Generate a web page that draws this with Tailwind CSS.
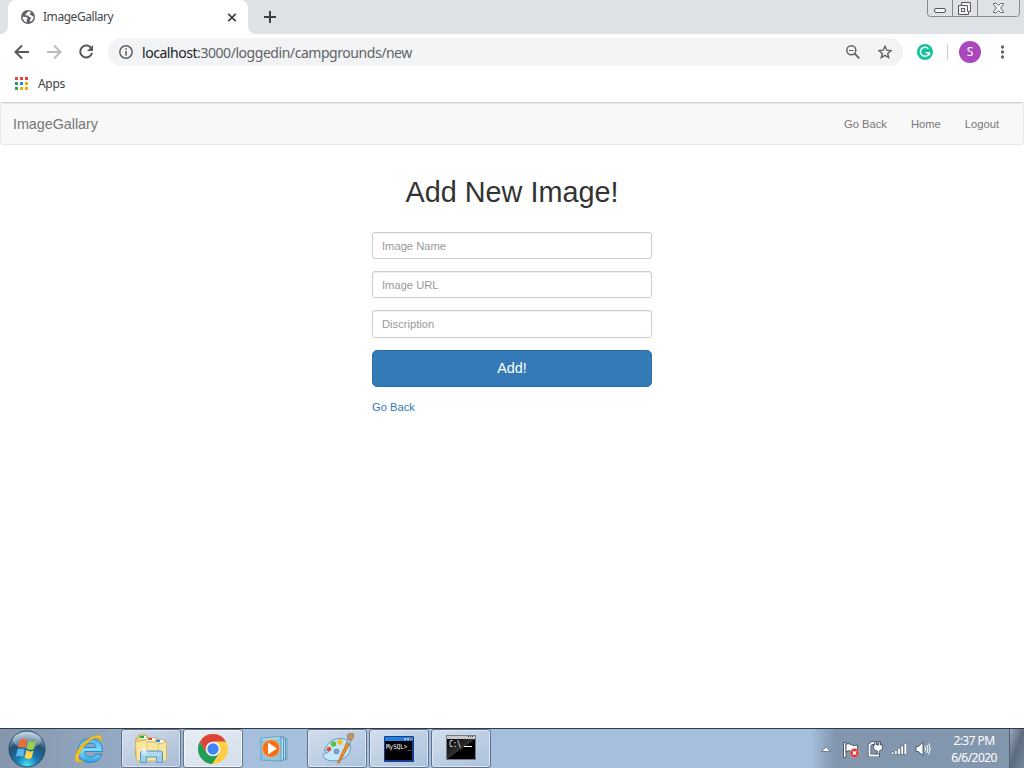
<!DOCTYPE html>
<html lang="en">
<head>
<meta charset="utf-8">
<title>ImageGallary</title>
<script src="https://cdn.jsdelivr.net/npm/@tailwindcss/browser@4"></script>
</head>
<body class="w-[1024px] h-[768px] overflow-hidden bg-white flex flex-col font-['Liberation_Sans',Arial,sans-serif]">

<!-- Tab strip -->
<div class="h-[34px] shrink-0 bg-[#dee1e6] flex justify-between items-start font-['Noto_Sans','Open_Sans',sans-serif]">
  <div class="flex h-[34px]">
    <div class="w-2 h-full bg-white"><div class="w-full h-full bg-[#dee1e6] rounded-br-lg"></div></div>
    <div class="w-[240px] h-full bg-[#dee1e6]">
      <div class="w-full h-full bg-white rounded-t-lg flex items-center pl-[13px]">
        <svg class="w-[14px] h-[14px]" viewBox="0 0 14 14"><circle cx="7" cy="7" r="7" fill="#5f6368"/><path d="M8 1.300 Q5.500 1.800 5.800 3.300 L4.400 4 Q4.200 5.500 5.500 5.400 H7.300 Q7.500 7 9.200 6.900 Q10.600 7.400 9.700 8.700 Q8.500 9.400 8.900 11.800 A5.500 5.500 0 0 0 12.700 6.500 L11 6 Q10.300 4.700 8.700 4.800 Q8.200 3.600 9.700 3.200 L9.600 1.900 Z" fill="#fff"/><path d="M1.400 6.700 L4.900 7 Q6.800 7.300 6.400 9 L5.600 9.700 L5.700 12.400 Q2 11.400 1.400 6.700Z" fill="#fff"/></svg>
        <span class="ml-2 text-[12px] tracking-[-0.45px] text-[#45494d] w-[184px]">ImageGallary</span>
        <svg class="w-[10px] h-[9px]" viewBox="0 0 10 9"><path d="M1.300 .8L8.700 8.200M8.700 .8L1.300 8.200" stroke="#3c4043" stroke-width="1.700"/></svg>
      </div>
    </div>
    <div class="w-2 h-full bg-white"><div class="w-full h-full bg-[#dee1e6] rounded-bl-lg"></div></div>
    <svg class="ml-2 mt-[11px] w-3 h-3" viewBox="0 0 12 12"><path d="M6 0V12M0 6H12" stroke="#3c4043" stroke-width="2"/></svg>
  </div>
  <svg class="w-[94px] h-[17px] mr-[3px]" viewBox="0 0 94 17">
    <path d="M.5 0V13.500Q.5 16.500 3.500 16.500H89.500Q92.500 16.500 92.500 13.500V0M25.500 0V16M50.500 0V16" fill="none" stroke="#85888c"/>
    <rect x="7.500" y="8.500" width="11" height="4" rx="1.500" fill="#f4f4f4" stroke="#54575c"/>
    <path d="M34.500 2.500H43.500V11.500H41.500V14.500H31.500V5.500H34.500Z" fill="#f4f4f4" stroke="#54575c"/><path d="M34.500 5.500H40.500V11.500" fill="none" stroke="#54575c"/><rect x="34.500" y="8.500" width="3" height="3" fill="#fff" stroke="#54575c"/>
    <path d="M66.500 3.500H69.500L71.500 5.500L73.500 3.500H76.500V4.500L73.500 8L76.500 11.500V12.500H73.500L71.500 10.500L69.500 12.500H66.500V11.500L69.500 8L66.500 4.500Z" fill="#f6f6f6" stroke="#65686c"/>
  </svg>
</div>

<!-- Toolbar -->
<div class="h-[36px] shrink-0 flex items-center pl-[14px] font-['Noto_Sans','Open_Sans',sans-serif]">
  <svg class="w-4 h-4" viewBox="0 0 16 16" fill="none" stroke="#55595d" stroke-width="2"><path d="M15 8H2.500M8 1.500L1.500 8L8 14.500"/></svg>
  <svg class="ml-4 w-4 h-4" viewBox="0 0 16 16" fill="none" stroke="#babcbe" stroke-width="2"><path d="M1 8H13.500M8 1.500L14.500 8L8 14.500"/></svg>
  <svg class="ml-4 w-4 h-4" viewBox="0 0 16 16" fill="none"><path d="M13.500 4.700A6 6 0 1 0 14 9" stroke="#55595d" stroke-width="2"/><path d="M15 1V7H9Z" fill="#55595d"/></svg>
  <div class="ml-[14px] w-[795px] h-7 rounded-full bg-[#f1f3f4] flex items-center pl-[11px]">
    <svg class="w-[14px] h-[14px]" viewBox="0 0 14 14"><circle cx="7" cy="7" r="6.200" fill="none" stroke="#5f6368" stroke-width="1.500"/><path d="M7 6V10.500M7 3.200V4.800" stroke="#5f6368" stroke-width="1.600"/></svg>
    <span class="ml-[9px] w-[704px] whitespace-nowrap text-[14px] tracking-[-0.45px] text-[#5f6368]"><span class="text-[#202124]">localhost</span>:3000/loggedin/campgrounds/new</span>
    <svg class="w-[14px] h-[14px]" viewBox="0 0 14 14" fill="none" stroke="#5f6368"><circle cx="5.300" cy="5.300" r="4.500" stroke-width="1.500"/><path d="M8.600 8.600L13.300 13.300" stroke-width="1.900"/><path d="M3 5.500H7.600"/></svg>
    <svg class="ml-[18px] w-[14px] h-[14px]" viewBox="0 0 14 14"><path d="M7 1.300L8.700 5.200L13 5.600L9.700 8.400L10.700 12.600L7 10.400L3.300 12.600L4.300 8.400L1 5.600L5.300 5.200Z" fill="none" stroke="#5f6368" stroke-width="1.400"/></svg>
  </div>
  <svg class="ml-[14px] w-4 h-4" viewBox="0 0 16 16"><circle cx="8" cy="8" r="8" fill="#15c39a"/><path d="M11.300 4.700A4.500 4.500 0 1 0 12.300 8.800H8.700M12.400 8.200V11.500" fill="none" stroke="#fff" stroke-width="1.400"/></svg>
  <div class="ml-[14px] w-px h-4 bg-[#c8cacd]"></div>
  <div class="ml-[11px] w-[22px] h-[22px] rounded-full bg-[#ab47bc] text-white text-[12px] leading-[22px] text-center">S</div>
  <svg class="ml-[19px] w-[5px] h-[14px]" viewBox="0 0 5 14" fill="#5f6368"><circle cx="2.500" cy="2" r="1.650"/><circle cx="2.500" cy="7" r="1.650"/><circle cx="2.500" cy="12" r="1.650"/></svg>
</div>

<!-- Bookmarks bar -->
<div class="h-[33px] shrink-0 border-b border-[#d2d3d5] flex items-start pt-[7px] pl-[15px] font-['Noto_Sans','Open_Sans',sans-serif]">
  <svg class="w-[13px] h-[13px]" viewBox="0 0 13 13"><path d="M0 0h3v3H0zM5 0h3v3H5zM10 0h3v3H10z" fill="#ea4335"/><path d="M0 5h3v3H0zM0 10h3v3H0z" fill="#34a05a"/><path d="M5 5h3v3H5z" fill="#1e88f5"/><path d="M10 5h3v3H10zM5 10h3v3H5zM10 10h3v3H10z" fill="#f5ae08"/></svg>
  <span class="ml-[10px] text-[12px] leading-[14px] tracking-[-0.3px] text-[#3c4043]">Apps</span>
</div>

<!-- Page -->
<nav class="h-[42px] shrink-0 bg-[#f8f8f8] border border-[#e7e7e7] rounded-[3px] flex items-center justify-between pl-3 pr-6 text-[#777]">
  <a class="text-[14.4px] tracking-[-0.06px] pt-[2px]">ImageGallary</a>
  <div class="flex gap-6 text-[11.2px]"><a>Go Back</a><a>Home</a><a>Logout</a></div>
</nav>
<main class="flex-1 flex flex-col items-center text-[11.2px]">
  <h1 class="mt-[31px] text-[28.8px] leading-[32px] text-[#333]">Add New Image!</h1>
  <form class="mt-[24px] w-[280px] flex flex-col">
    <input placeholder="Image Name" class="h-[27px] border border-[#ccc] rounded-[3px] px-[9px] placeholder-[#999] shadow-[inset_0_1px_1px_rgba(0,0,0,0.06)]">
    <input placeholder="Image URL" class="mt-3 h-[27px] border border-[#ccc] rounded-[3px] px-[9px] placeholder-[#999] shadow-[inset_0_1px_1px_rgba(0,0,0,0.06)]">
    <input placeholder="Discription" class="mt-3 h-[28px] border border-[#ccc] rounded-[3px] px-[9px] placeholder-[#999] shadow-[inset_0_1px_1px_rgba(0,0,0,0.06)]">
    <button type="button" class="mt-3 h-[37px] bg-[#337ab7] border border-[#2e6da4] rounded-[5px] text-white text-[14.4px]">Add!</button>
    <a class="mt-3 leading-4 text-[#337ab7]">Go Back</a>
  </form>
</main>

<!-- Taskbar -->
<footer class="h-10 shrink-0 border-t border-[#303a47] bg-linear-to-r from-[#8596ad] from-0% via-[#a6bfdc] via-24% to-[#a6bfdc] to-76% flex font-['Noto_Sans','Open_Sans',sans-serif]">
  <div class="w-[59px] flex items-center pl-2">
    <svg class="w-[38px] h-[38px]" viewBox="0 0 38 38">
      <defs><radialGradient id="orb" cx=".5" cy=".95" r=".9"><stop offset="0" stop-color="#45e4f5"/><stop offset=".35" stop-color="#1678ad"/><stop offset=".7" stop-color="#245073"/><stop offset="1" stop-color="#a4bfd2"/></radialGradient></defs>
      <circle cx="19" cy="19" r="18" fill="url(#orb)" stroke="#294b68"/><ellipse cx="19" cy="10" rx="14" ry="8" fill="#fff" opacity=".3"/>
      <path d="M12 10Q15.500 8 19 10.200L17.200 18Q13.500 16 9.800 17.800Z" fill="#f26a35"/><path d="M20.500 10.800Q24 13 28 11L26 19Q22 21 18.700 18.600Z" fill="#9bd04c"/><path d="M9.500 19.200Q13 17.500 16.800 19.400L15 27Q11.500 25 7.800 26.800Z" fill="#5ab7ec"/><path d="M18.300 20Q22 22.500 25.600 20.500L23.600 28Q20 30 16.500 27.600Z" fill="#ffd34b"/>
    </svg>
  </div>
  <div class="flex gap-[2px] w-[432px]">
    <div class="w-[60px] flex items-center justify-center">
      <svg class="w-[34px] h-8" viewBox="0 0 34 32"><defs><linearGradient id="ie" x2="0" y2="1"><stop stop-color="#4fb5ee"/><stop offset=".5" stop-color="#7cdcfc"/><stop offset="1" stop-color="#2aa3de"/></linearGradient></defs><path d="M30.500 18.500H12.500Q13 24 18.500 24Q22 24 23.500 21.200H30Q27 29.500 18 29.500Q6 29 6 17.500Q6.500 5.500 18.500 5.500Q30.500 6 30.500 18.500ZM12.500 14.500H24Q23.500 10.300 18.500 10.300Q13.500 10.300 12.500 14.500Z" fill="url(#ie)" stroke="#2482c4" stroke-width=".9"/><path d="M28.500 8.500Q30.500 2.500 26 2.500Q19.500 3 12 10Q3.500 19 3.500 26Q4 30.500 11 28Q5.500 29 6 24.500Q7.500 16.500 14.500 10Q21 4.300 25.500 4.300Q28.500 4.500 28.500 8.500Z" fill="#ffd732" stroke="#eeb111" stroke-width="1.200"/></svg>
    </div>
    <div class="w-[60px] h-[39px] border border-[#5e728c] rounded-[3px] bg-linear-to-br from-[#d2ddeb] to-[#a9bdd6] shadow-[inset_0_0_0_1px_#dce6f1] flex items-center justify-center">
      <svg class="w-[34px] h-8" viewBox="0 0 34 32"><path d="M1.500 24V7Q2 5 4 5L5 2H12L14 5H22L24 7H31V11H4" fill="#e9cf78" stroke="#bfa04b" stroke-width=".8"/><path d="M6 3H12V6H6ZM13 5H21V8H13ZM22 7H30V10H22Z" fill="#fbfbf5"/><path d="M6 4h4" stroke="#18b035" stroke-width="2"/><path d="M14 6h4" stroke="#d94e2a" stroke-width="2"/><path d="M22 8h4" stroke="#268be0" stroke-width="2"/><path d="M1.500 9L12 7L14 9H23L25 11L32.500 8.500V28H2.500Z" fill="#f9e69c" stroke="#cfb25c" stroke-width=".8"/><path d="M13 9V26M24 11V26" stroke="#e2cc80"/><path d="M6.500 29.500V20Q6.500 18 8.500 18H26.500Q28.500 18 28.500 20V29.500H22.500V24H12.500V29.500Z" fill="#99cde8" stroke="#5a9bc4"/><path d="M8 20H27M8 22H27" stroke="#c7eafa" stroke-width="1"/><path d="M10 14V22M6 18H14M7.500 15.500L12.500 20.500M12.500 15.500L7.500 20.500" stroke="#fff" stroke-width=".8"/></svg>
    </div>
    <div class="w-[60px] h-[39px] border border-[#65758a] rounded-[3px] bg-linear-to-br from-[#e8edf4] to-[#d2deea] shadow-[inset_0_0_0_1px_#f2f6fa] flex items-center justify-center">
      <svg class="w-[30px] h-[30px]" viewBox="0 0 30 30"><circle cx="15" cy="15" r="15" fill="#ffce44"/><path d="M15 15L8.500 18.700L2 7.500A15 15 0 0 0 14 30L21.500 18.700Z" fill="#229d58"/><path d="M2 7.500A15 15 0 0 1 28 7.500H15L8.500 18.700Z" fill="#db4437"/><circle cx="15" cy="15" r="7.300" fill="#f5f8fb"/><circle cx="15" cy="15" r="5.700" fill="#4285f4"/></svg>
    </div>
    <div class="w-[60px] flex items-center justify-center">
      <svg class="w-[30px] h-[28px]" viewBox="0 0 30 28"><path d="M1 3L21 1.500L23 2V24L21 26L1 25Z" fill="#8dc6df" stroke="#5a9dbe" stroke-width=".8"/><path d="M21 2V26L23.500 25V2ZM23.500 3V25L25.500 24.500V3ZM25.500 3.500V25L27 24V3.500Z" fill="#b4dcec" stroke="#4a8db4" stroke-width=".7"/><path d="M2.500 4.500L19.500 3" stroke="#c8e9f4"/><circle cx="11" cy="13.500" r="8.700" fill="#f2701c" stroke="#ffae6c"/><path d="M8 7.500L17 13.500L8 19.500Z" fill="#fff"/></svg>
    </div>
    <div class="w-[60px] h-[39px] border border-[#5e728c] rounded-[3px] bg-linear-to-br from-[#d2deed] to-[#abc1dc] shadow-[inset_0_0_0_1px_#dce6f1] flex items-center justify-center">
      <svg class="w-[34px] h-8" viewBox="0 0 34 32"><path d="M6 14Q11 5 21 5.500Q31 6 30.500 15Q29.500 25 18 27.500Q9 29 5 25.500Q1.500 22 4.500 20Q8.500 20.500 9 18Q8 16 4.500 18Q3.500 18 6 14Z" fill="#c5e6f6" stroke="#5c9fc9"/><circle cx="9" cy="16" r="2.300" fill="#e64a33"/><circle cx="13.500" cy="11" r="2.700" fill="#5bbd45"/><circle cx="20" cy="9" r="2.700" fill="#f4bd26"/><circle cx="16.500" cy="18.500" r="2.300" fill="#78add7" stroke="#4c86b3"/><path d="M26.500 10L29.500 11.500L19.500 29.500L17.500 30Z" fill="#f08d25" stroke="#bf671b" stroke-width=".8"/><path d="M26.500 10L28.500 5L31.500 6.500L29.500 11.500Z" fill="#b6bcc4" stroke="#747c87" stroke-width=".7"/><path d="M28 5.500Q26 2 29 .5L34 1Q35 4 31.500 7Z" fill="#bd9a68" stroke="#8d6e42" stroke-width=".7"/></svg>
    </div>
    <div class="w-[60px] h-[39px] border border-[#5e728c] rounded-[3px] bg-linear-to-br from-[#d2deed] to-[#abc1dc] shadow-[inset_0_0_0_1px_#dce6f1] flex items-center justify-center">
      <svg class="w-[30px] h-[26px] overflow-visible" viewBox="0 0 30 26"><rect width="30" height="26" rx="1" fill="#143f91"/><rect x="1" y="1" width="28" height="4" fill="#2480dc"/><path d="M20 2h2v2h-2zM23 2h2v2h-2z" fill="#a2c9f4"/><path d="M26 2h2v2h-2z" fill="#ed6843"/><rect x="1" y="5" width="27" height="19" fill="#000"/><text x="2" y="13" fill="#fff" font-family="DejaVu Sans Mono" font-size="7" textLength="25" lengthAdjust="spacingAndGlyphs">MySQL&gt;_</text></svg>
    </div>
    <div class="w-[60px] h-[39px] border border-[#5e728c] rounded-[3px] bg-linear-to-br from-[#d2deed] to-[#abc1dc] shadow-[inset_0_0_0_1px_#dce6f1] flex items-center justify-center">
      <svg class="w-[30px] h-[25px] -mt-[2px]" viewBox="0 0 30 25"><defs><linearGradient id="cmd" x2="1" y2="1"><stop stop-color="#000"/><stop offset=".5" stop-color="#333"/><stop offset=".51" stop-color="#000"/></linearGradient></defs><rect width="30" height="25" fill="#747b82"/><rect x="1" y="1" width="28" height="3" fill="#c5c9cd"/><path d="M22 1h1v1h-1zM24 1h1v1h-1zM26 1h1v1h-1z" fill="#444"/><rect x="1" y="4" width="28" height="20" fill="url(#cmd)"/><text x="3" y="12" fill="#fff" font-family="DejaVu Sans Mono" font-size="8" textLength="12" lengthAdjust="spacingAndGlyphs">C:\</text><path d="M18 11.500H26" stroke="#fff"/></svg>
    </div>
  </div>
  <div class="flex-1"></div>
  <div class="w-[214px] bg-linear-to-r from-[#a6bfdc] to-[#8296ae] to-12% flex items-center">
    <svg class="ml-[11px] w-[10px] h-[6px]" viewBox="0 0 10 6"><path d="M.5 5.500L5 .8L9.500 5.500Z" fill="#fff" stroke="#4c5d73" stroke-width=".7"/></svg>
    <svg class="ml-[12px] mt-[2px] w-[17px] h-4" viewBox="0 0 17 16"><path d="M.5 .5H3V15.500H.5Z" fill="#fff" stroke="#3e4f66" stroke-width=".9"/><path d="M3 2Q6 1 8.500 2.700T14.500 3V10Q11 11 8.500 9.500T3 9.500Z" fill="#fff" stroke="#3e4f66" stroke-width=".9"/><circle cx="11.500" cy="11" r="4.500" fill="#d8302c" stroke="#f2b6b0" stroke-width=".6"/><path d="M9.700 9.200L13.300 12.800M13.300 9.200L9.700 12.800" stroke="#fff" stroke-width="1.500"/></svg>
    <svg class="ml-[7px] w-4 h-4" viewBox="0 0 16 16" fill="none"><path d="M7 2H5L2.500 4V14.500H11V12" stroke="#3e4f66" stroke-width="3.400"/><path d="M7 2H5L2.500 4V14.500H11V12" stroke="#fff" stroke-width="1.800"/><path d="M8 .5H9.700V4H11.800V.5H13.500V4H15.500V7Q15.500 9.500 12.300 10V13H10.300V10Q6.500 9.500 6.500 7V4H8Z" fill="#fff" stroke="#3e4f66" stroke-width=".9"/></svg>
    <svg class="ml-2 w-4 h-3" viewBox="0 0 16 12" fill="#fff" stroke="#3e4f66" stroke-width=".5"><path d="M.3 9h2.600v2.500H.3zM3.500 7.500h2.600v4H3.500zM6.700 5.300h2.600v6.200H6.700zM9.900 3h2.600v8.500H9.900zM13.100 .5h2.600v11h-2.600z"/></svg>
    <svg class="ml-2 w-4 h-4" viewBox="0 0 16 16"><path d="M1 5.500H3.500L8 1V15L3.500 10.500H1Z" fill="#fff" stroke="#3e4f66" stroke-width=".9"/><path d="M9.800 5.500Q11.500 8 9.800 10.500M11.800 4Q14 8 11.800 12M13.700 2.500Q16.700 8 13.700 13.500" fill="none" stroke="#fff" stroke-width="1"/></svg>
    <div class="ml-[15px] w-[56px] text-center text-white text-[12px] leading-[17px] tracking-[-0.55px] whitespace-nowrap mt-px">2:37 PM<br>6/6/2020</div>
    <div class="ml-auto w-[15px] h-full border-l border-[#506075] bg-linear-to-br from-[#9caabc] via-[#5c6b7e] via-50% to-[#77879a]"></div>
  </div>
</footer>
</body>
</html>
